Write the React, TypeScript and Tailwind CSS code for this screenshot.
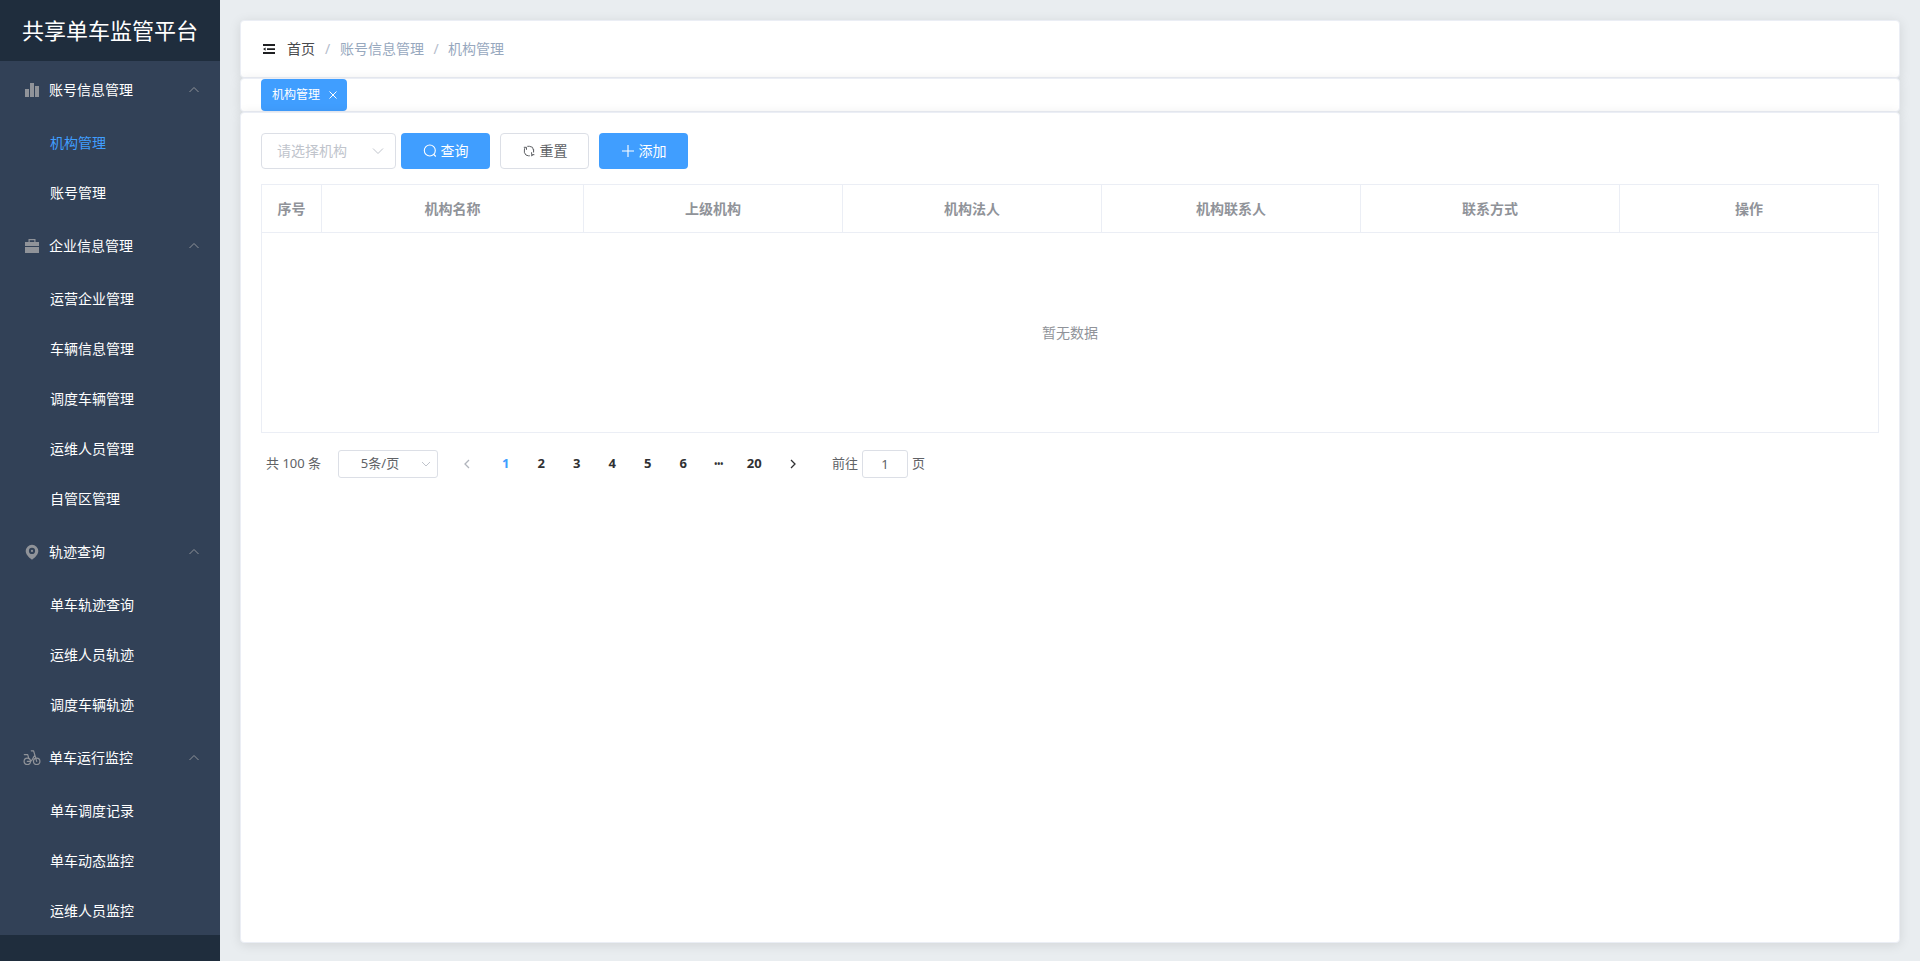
import { useState } from "react";
import type { ReactNode } from "react";

type Group = { title: string; icon: ReactNode; items: string[] };

const groups: Group[] = [
  {
    title: "账号信息管理",
    icon: (
      <svg viewBox="0 0 18 18" className="size-[18px] fill-[#909399]" aria-hidden="true">
        <path d="M2 8h4v8H2zM7 2h4v14H7zM12 5h4v11h-4z" />
      </svg>
    ),
    items: ["机构管理", "账号管理"],
  },
  {
    title: "企业信息管理",
    icon: (
      <svg viewBox="0 0 18 18" className="size-[18px] fill-[#909399]" aria-hidden="true">
        <path d="M2 10h14v6H2zM2 5h3.500V2h7v3H16v4H2zM6.700 3.200V5h4.600V3.200z" fillRule="evenodd" />
      </svg>
    ),
    items: ["运营企业管理", "车辆信息管理", "调度车辆管理", "运维人员管理", "自管区管理"],
  },
  {
    title: "轨迹查询",
    icon: (
      <svg viewBox="0 0 18 18" className="size-[18px] fill-[#909399]" aria-hidden="true">
        <path
          d="M9 1.800a6.300 6.300 0 0 0-6.300 6.300C2.700 11.500 6 14.600 9 16.800c3-2.200 6.300-5.300 6.300-8.700A6.300 6.300 0 0 0 9 1.800zm0 3a3.100 3.100 0 1 1 0 6.200 3.100 3.100 0 0 1 0-6.200z"
          fillRule="evenodd"
        />
        <circle cx="9" cy="7.900" r="1.100" />
      </svg>
    ),
    items: ["单车轨迹查询", "运维人员轨迹", "调度车辆轨迹"],
  },
  {
    title: "单车运行监控",
    icon: (
      <svg
        viewBox="0 0 18 18"
        className="size-[18px] fill-none stroke-[#909399]"
        strokeWidth="1.200"
        strokeLinecap="round"
        strokeLinejoin="round"
        aria-hidden="true"
      >
        <circle cx="4.300" cy="12.300" r="3.200" />
        <circle cx="13.700" cy="12.300" r="3.200" />
        <path d="M1.300 5.600h3.400l1 3.600M8.300 1.800h2.300l3.100 10.500M4.300 12.300h3.200c2 0 2.400-4.600 4.300-5.800" />
      </svg>
    ),
    items: ["单车调度记录", "单车动态监控", "运维人员监控"],
  },
];

const columns = ["机构名称", "上级机构", "机构法人", "机构联系人", "联系方式", "操作"];
const pages = ["1", "2", "3", "4", "5", "6", "•••", "20"];

function Chevron({ d, className }: { d: string; className: string }) {
  return (
    <svg viewBox="0 0 12 12" className={`fill-none ${className}`} aria-hidden="true">
      <path d={d} />
    </svg>
  );
}

const UP = "M1.500 8L6 3.500l4.500 4.500";
const DOWN = "M1 3.500L6 8.500l5-5";

function Sidebar() {
  const [closed, setClosed] = useState<string[]>([]);
  const toggle = (t: string) =>
    setClosed((c) => (c.includes(t) ? c.filter((x) => x !== t) : [...c, t]));
  return (
    <aside className="w-[220px] shrink-0 bg-[#1f2d3d] text-white">
      <h1 className="h-[61px] text-center text-[22px] leading-[60px]">共享单车监管平台</h1>
      <nav className="bg-[#324157]">
        {groups.map((g) => (
          <section key={g.title}>
            <button
              type="button"
              onClick={() => toggle(g.title)}
              className="flex h-14 w-full items-center pt-0.5 pr-5 pl-[23px] text-left text-sm"
            >
              {g.icon}
              <span className="ml-2 flex-1">{g.title}</span>
              <Chevron d={UP} className="size-3 stroke-[#909399]" />
            </button>
            {!closed.includes(g.title) && (
              <ul>
                {g.items.map((item) => (
                  <li key={item}>
                    <a
                      href="#"
                      className={`flex h-[50px] items-center pt-0.5 pl-[50px] text-sm ${
                        item === "机构管理" ? "text-[#409eff]" : "text-white"
                      }`}
                    >
                      {item}
                    </a>
                  </li>
                ))}
              </ul>
            )}
          </section>
        ))}
      </nav>
    </aside>
  );
}

const card = "rounded border border-[#ebeef5] bg-white shadow-[0_2px_12px_0_rgba(0,0,0,0.1)]";
const primary =
  "flex h-9 w-[89px] items-center justify-center gap-1 rounded bg-[#409eff] text-sm text-white";

function Pagination() {
  return (
    <div className="mt-[17px] flex h-7 items-center pl-[5px] text-[13px] text-[#606266]">
      <span className="w-[72px]">共 100 条</span>
      <div className="relative w-[100px]">
        <select
          aria-label="每页条数"
          className="h-7 w-full appearance-none rounded-[3px] border border-[#dcdfe6] bg-white pr-4 text-center text-[13px]"
        >
          <option>5条/页</option>
          <option>10条/页</option>
        </select>
        <Chevron
          d="M2 4l4 4 4-4"
          className="pointer-events-none absolute top-2 right-1.5 size-3 stroke-[#c0c4cc]"
        />
      </div>
      <button type="button" aria-label="上一页" disabled className="ml-2 flex w-[42px] justify-center">
        <Chevron d="M8 2L4 6l4 4" className="size-3 stroke-[#b0b4bc] stroke-[1.300]" />
      </button>
      <ul className="grid w-[284px] grid-cols-8 text-center font-bold">
        {pages.map((p) => (
          <li key={p} className="flex items-center justify-center">
            <button
              type="button"
              className={
                p === "1" ? "text-[#409eff]" : p === "•••" ? "text-[8px] text-[#303133]" : "text-[#303133]"
              }
            >
              {p}
            </button>
          </li>
        ))}
      </ul>
      <button type="button" aria-label="下一页" className="flex w-[42px] justify-center">
        <Chevron d="M4 2l4 4-4 4" className="size-3 stroke-[#303133] stroke-[1.300]" />
      </button>
      <label className="ml-[18px] flex items-center gap-1">
        前往
        <input
          defaultValue="1"
          className="h-7 w-[46px] rounded-[3px] border border-[#dcdfe6] text-center text-[13px]"
        />
        页
      </label>
    </div>
  );
}

export default function App() {
  return (
    <div className="flex min-h-screen bg-[#e9edf0] font-['Noto_Sans','Noto_Sans_CJK_SC',sans-serif]">
      <Sidebar />
      <main className="flex min-w-0 flex-1 flex-col px-5 pt-5 pb-[18px]">
        <header className={`${card} flex h-[58px] items-center px-5`}>
          <button type="button" aria-label="收起菜单" className="flex w-[26px] pl-0.5">
            <svg viewBox="0 0 12 12" className="size-3 fill-[#1f2022]" aria-hidden="true">
              <path d="M0 1h12v2H0zM4 5.200h8V7H4zM0 9h12v2H0zM0 6.100l2.600-1.600v3.200z" />
            </svg>
          </button>
          <nav className="flex text-sm text-[#97a8be]">
            <a href="#" className="text-[#48494c]">
              首页
            </a>
            <span className="w-[25px] text-center text-[#b4bccc]">/</span>
            <a href="#">账号信息管理</a>
            <span className="w-6 text-center text-[#b4bccc]">/</span>
            <span>机构管理</span>
          </nav>
        </header>

        <div className={`${card} px-5`}>
          <div className="flex h-8 w-[86px] items-center justify-between rounded bg-[#409eff] pr-2.5 pl-[11px] text-xs text-white">
            <span>机构管理</span>
            <button type="button" aria-label="关闭">
              <svg viewBox="0 0 8 8" className="size-2 stroke-white" aria-hidden="true">
                <path d="M.5.5l7 7M7.500.5l-7 7" />
              </svg>
            </button>
          </div>
        </div>

        <section className={`${card} flex-1 p-5`}>
          <form className="flex" onSubmit={(e) => e.preventDefault()}>
            <div className="relative mr-[5px] w-[135px]">
              <select
                aria-label="机构"
                className="h-9 w-full appearance-none rounded border border-[#dcdfe6] bg-white pl-[15px] text-sm text-[#c0c4cc]"
              >
                <option>请选择机构</option>
              </select>
              <Chevron
                d={DOWN}
                className="pointer-events-none absolute top-3 right-3 size-3 stroke-[#c0c4cc]"
              />
            </div>
            <button type="submit" className={primary}>
              <svg
                viewBox="0 0 14 14"
                className="size-3.5 fill-none stroke-white"
                strokeWidth="1.100"
                aria-hidden="true"
              >
                <circle cx="6.800" cy="6.500" r="5.500" />
                <path d="M10.800 10.500l2 2" />
              </svg>
              查询
            </button>
            <button
              type="reset"
              className="mx-2.5 flex h-9 w-[89px] items-center justify-center gap-1 rounded border border-[#dcdfe6] bg-white text-sm text-[#606266]"
            >
              <svg
                viewBox="0 0 14 14"
                className="size-3.5 fill-none stroke-[#606266]"
                strokeWidth="1"
                aria-hidden="true"
              >
                <path d="M2.400 8.800V6a3.800 3.800 0 0 1 .8-2.400M5.300 2.300h2.200a4 4 0 0 1 4 4v1.500M11.600 5.200v3.300M11.600 10.400a4.500 4.500 0 0 1-2.600 1.500M7.800 11.800H6.400a4 4 0 0 1-3.800-3M1.800 3.300h2.700v2.500M12.400 10.700H9.600V8.200" />
              </svg>
              重置
            </button>
            <button type="button" className={primary}>
              <svg
                viewBox="0 0 14 14"
                className="size-3.5 fill-none stroke-white"
                strokeWidth="1.100"
                aria-hidden="true"
              >
                <path d="M7 1v12M1 7h12" />
              </svg>
              添加
            </button>
          </form>

          <table className="mt-[15px] w-full table-fixed border-collapse border border-[#ebeef5] text-sm text-[#909399]">
            <colgroup>
              <col className="w-[60px]" />
              <col className="w-[262px]" />
              <col span={5} />
            </colgroup>
            <thead>
              <tr className="h-12">
                <th className="border border-[#ebeef5]">序号</th>
                {columns.map((c) => (
                  <th key={c} className="border border-[#ebeef5]">
                    {c}
                  </th>
                ))}
              </tr>
            </thead>
            <tbody>
              <tr>
                <td colSpan={7} className="h-[200px] text-center">
                  暂无数据
                </td>
              </tr>
            </tbody>
          </table>

          <Pagination />
        </section>
      </main>
    </div>
  );
}
